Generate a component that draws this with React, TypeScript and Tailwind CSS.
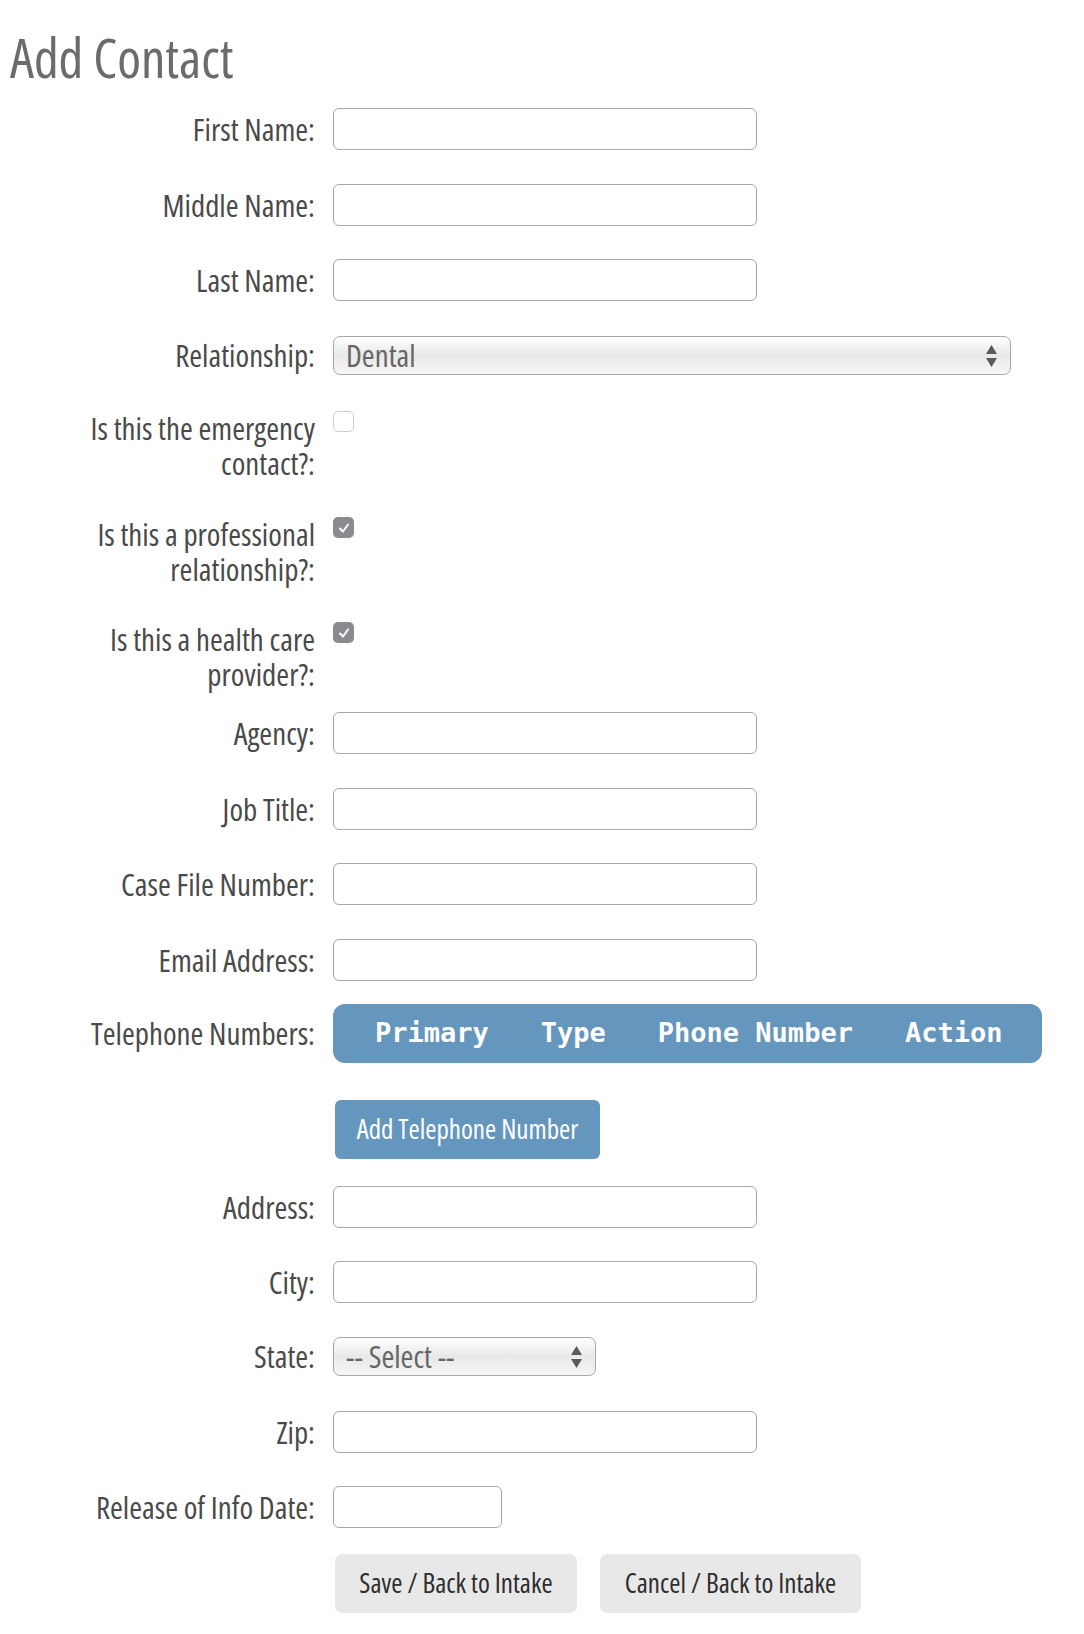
import React from "react";

const font = "font-['Open_Sans',sans-serif] font-stretch-condensed";

interface RowProps {
  label: React.ReactNode;
  className?: string;
  align?: "center" | "start";
  children: React.ReactNode;
}

const Row: React.FC<RowProps> = ({ label, className = "", align = "center", children }) => (
  <div className={`flex ${align === "center" ? "items-center" : "items-start"} ${className}`}>
    <label className="w-[315px] shrink-0 text-right text-[31px] leading-[35px] text-[#4a4a4a]">
      {label}
    </label>
    <div className="ml-[18px] flex">{children}</div>
  </div>
);

const TextInput: React.FC<{ width?: string }> = ({ width = "w-[424px]" }) => (
  <input
    type="text"
    className={`${width} h-[42px] rounded-[6px] border-[1.5px] border-[#a8a8a8] bg-white px-3 text-[26px] outline-none`}
  />
);

const Arrows = () => (
  <svg width="13" height="24" viewBox="0 0 13 24" className="pointer-events-none absolute right-[13px] top-1/2 -translate-y-1/2">
    <path d="M6.5 1 L12 10 L1 10 Z" fill="#5a5a5a" />
    <path d="M1 14 L12 14 L6.5 23 Z" fill="#5a5a5a" />
  </svg>
);

const Select: React.FC<{ width: string; value: string; options: string[] }> = ({ width, value, options }) => (
  <div className={`relative ${width}`}>
    <select
      defaultValue={value}
      className={`h-[39px] w-full appearance-none rounded-[7px] border-[1.5px] border-[#a8a8a8] bg-gradient-to-b from-white via-[#e8e8e8] to-[#f7f7f7] pl-[12px] text-[31px] leading-none text-[#666] outline-none ${font}`}
    >
      {options.map((o) => (
        <option key={o}>{o}</option>
      ))}
    </select>
    <Arrows />
  </div>
);

const Check: React.FC<{ checked?: boolean }> = ({ checked }) =>
  checked ? (
    <span className="flex h-[21px] w-[21px] items-center justify-center rounded-[5px] bg-[#8b8b8f]">
      <svg width="14" height="14" viewBox="0 0 14 14">
        <path d="M3 7.5 L6 10.5 L11 3.5" stroke="white" strokeWidth="2" fill="none" strokeLinecap="round" strokeLinejoin="round" />
      </svg>
    </span>
  ) : (
    <span className="block h-[21px] w-[21px] rounded-[5px] border-[1.5px] border-[#cdcdcd] bg-white" />
  );

export default function App() {
  return (
    <div className={`min-h-[1634px] w-[1084px] bg-white ${font}`}>
      <h1 className="pl-[10px] pt-[30px] text-[54px] leading-none text-[#6b6b6b]">Add Contact</h1>

      <Row label="First Name:" className="mt-[24px]">
        <TextInput />
      </Row>
      <Row label="Middle Name:" className="mt-[34px]">
        <TextInput />
      </Row>
      <Row label="Last Name:" className="mt-[33px]">
        <TextInput />
      </Row>
      <Row label="Relationship:" className="mt-[35px]">
        <Select width="w-[678px]" value="Dental" options={["Dental", "Medical", "Family", "Friend"]} />
      </Row>

      <Row
        label={
          <>
            Is this the emergency
            <br />
            contact?:
          </>
        }
        align="start"
        className="mt-[36px]"
      >
        <Check />
      </Row>
      <Row
        label={
          <>
            Is this a professional
            <br />
            relationship?:
          </>
        }
        align="start"
        className="mt-[36px]"
      >
        <Check checked />
      </Row>
      <Row
        label={
          <>
            Is this a health care
            <br />
            provider?:
          </>
        }
        align="start"
        className="mt-[35px]"
      >
        <Check checked />
      </Row>

      <Row label="Agency:" className="mt-[20px]">
        <TextInput />
      </Row>
      <Row label="Job Title:" className="mt-[34px]">
        <TextInput />
      </Row>
      <Row label="Case File Number:" className="mt-[33px]">
        <TextInput />
      </Row>
      <Row label="Email Address:" className="mt-[34px]">
        <TextInput />
      </Row>

      <Row label="Telephone Numbers:" className="mt-[23px]">
        <div className="flex h-[59px] w-[709px] items-center gap-[52px] rounded-[12px] bg-[#6596bd] pl-[42px] font-['DejaVu_Sans_Mono',monospace] text-[27px] font-bold text-white">
          <span>Primary</span>
          <span>Type</span>
          <span>Phone Number</span>
          <span>Action</span>
        </div>
      </Row>

      <div className="mt-[37px] pl-[335px]">
        <button className="h-[59px] w-[265px] rounded-[6px] bg-[#6596bd] text-[27px] text-white">
          Add Telephone Number
        </button>
      </div>

      <Row label="Address:" className="mt-[27px]">
        <TextInput />
      </Row>
      <Row label="City:" className="mt-[33px]">
        <TextInput />
      </Row>
      <Row label="State:" className="mt-[34px]">
        <Select width="w-[263px]" value="-- Select --" options={["-- Select --", "AL", "AK", "AZ", "NY"]} />
      </Row>
      <Row label="Zip:" className="mt-[35px]">
        <TextInput />
      </Row>
      <Row label="Release of Info Date:" className="mt-[33px]">
        <TextInput width="w-[169px]" />
      </Row>

      <div className="mt-[26px] flex gap-[23px] pl-[335px]">
        <button className="h-[59px] w-[242px] rounded-[7px] bg-[#e8e8e8] text-[27px] text-[#2e2e2e]">
          Save / Back to Intake
        </button>
        <button className="h-[59px] w-[261px] rounded-[7px] bg-[#e8e8e8] text-[27px] text-[#2e2e2e]">
          Cancel / Back to Intake
        </button>
      </div>
    </div>
  );
}
